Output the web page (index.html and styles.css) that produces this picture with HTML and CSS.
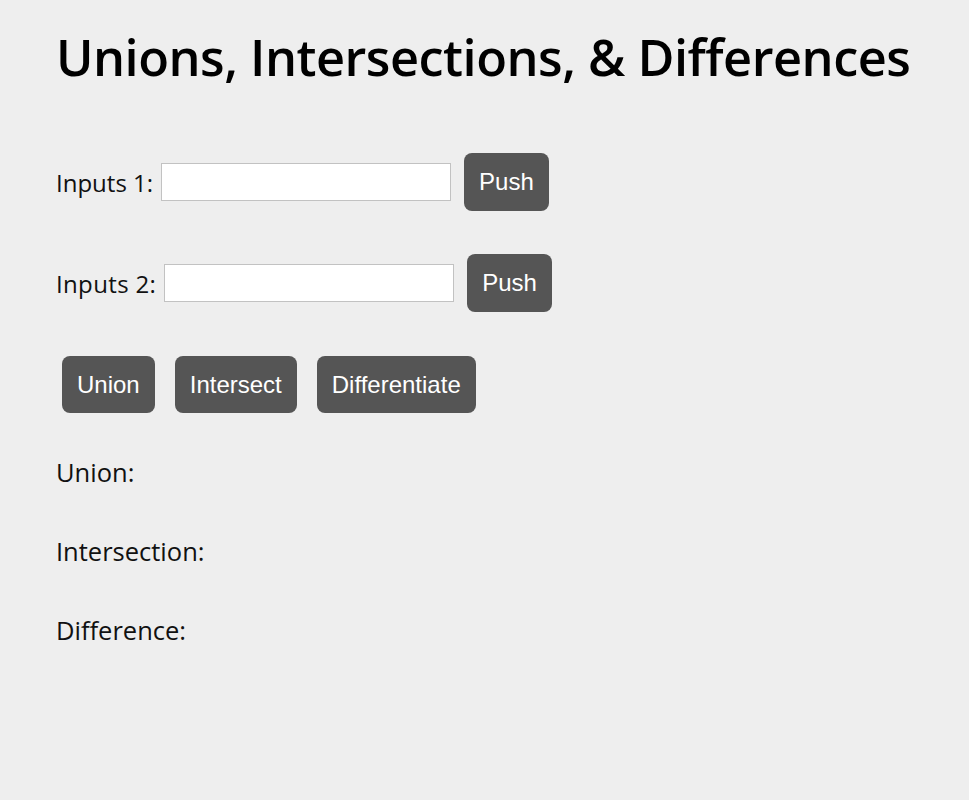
FILE: index.html
```html
<!DOCTYPE html>
<html>
<head>
<meta charset="utf-8">
<link rel="stylesheet" href="styles.css">
</head>
<body>
<main class="page">
  <h1 class="title">Unions, Intersections, &amp; Differences</h1>
  <div class="input-row">
    <label class="label">Inputs 1:</label>
    <input class="text-input" type="text">
    <button class="btn">Push</button>
  </div>
  <div class="input-row">
    <label class="label label-wide">Inputs 2:</label>
    <input class="text-input" type="text">
    <button class="btn">Push</button>
  </div>
  <div class="action-row">
    <button class="btn">Union</button>
    <button class="btn">Intersect</button>
    <button class="btn">Differentiate</button>
  </div>
  <div class="results">
    <p class="result">Union:</p>
    <p class="result">Intersection:</p>
    <p class="result">Difference:</p>
  </div>
</main>
</body>
</html>
```

FILE: styles.css
```css
html, body {
  margin: 0;
  padding: 0;
  background: #eeeeee;
}
.page {
  padding: 25px 0 0 56px;
  font-family: "Open Sans", "Noto Sans", sans-serif;
  color: #111;
}
.title {
  margin: 0 0 64px 0;
  font-size: 50.5px;
  font-weight: 600;
  line-height: 64px;
  letter-spacing: -0.5px;
  color: #000;
}
.input-row {
  display: flex;
  align-items: center;
  height: 58px;
  margin-bottom: 43px;
}
.label {
  font-size: 24px;
  margin-right: 8px;
}
.label-wide {
  letter-spacing: 0.35px;
}
.text-input {
  box-sizing: border-box;
  width: 290px;
  height: 38px;
  border: 1px solid #c2c2c2;
  background: #fff;
  margin: 0 13px 0 0;
  padding: 0 4px;
}
.btn {
  box-sizing: border-box;
  height: 58px;
  padding: 0 15px;
  border: none;
  border-radius: 8px;
  background: #555555;
  color: #fff;
  font-family: "Liberation Sans", Arial, sans-serif;
  font-size: 24px;
}
.action-row {
  display: flex;
  gap: 20px;
  margin: 44px 0 42px 6px;
  height: 57px;
}
.action-row .btn {
  height: 57px;
}
.results {
  display: flex;
  flex-direction: column;
  gap: 45px;
}
.result {
  margin: 0;
  font-size: 25.5px;
  line-height: 34px;
}
```
